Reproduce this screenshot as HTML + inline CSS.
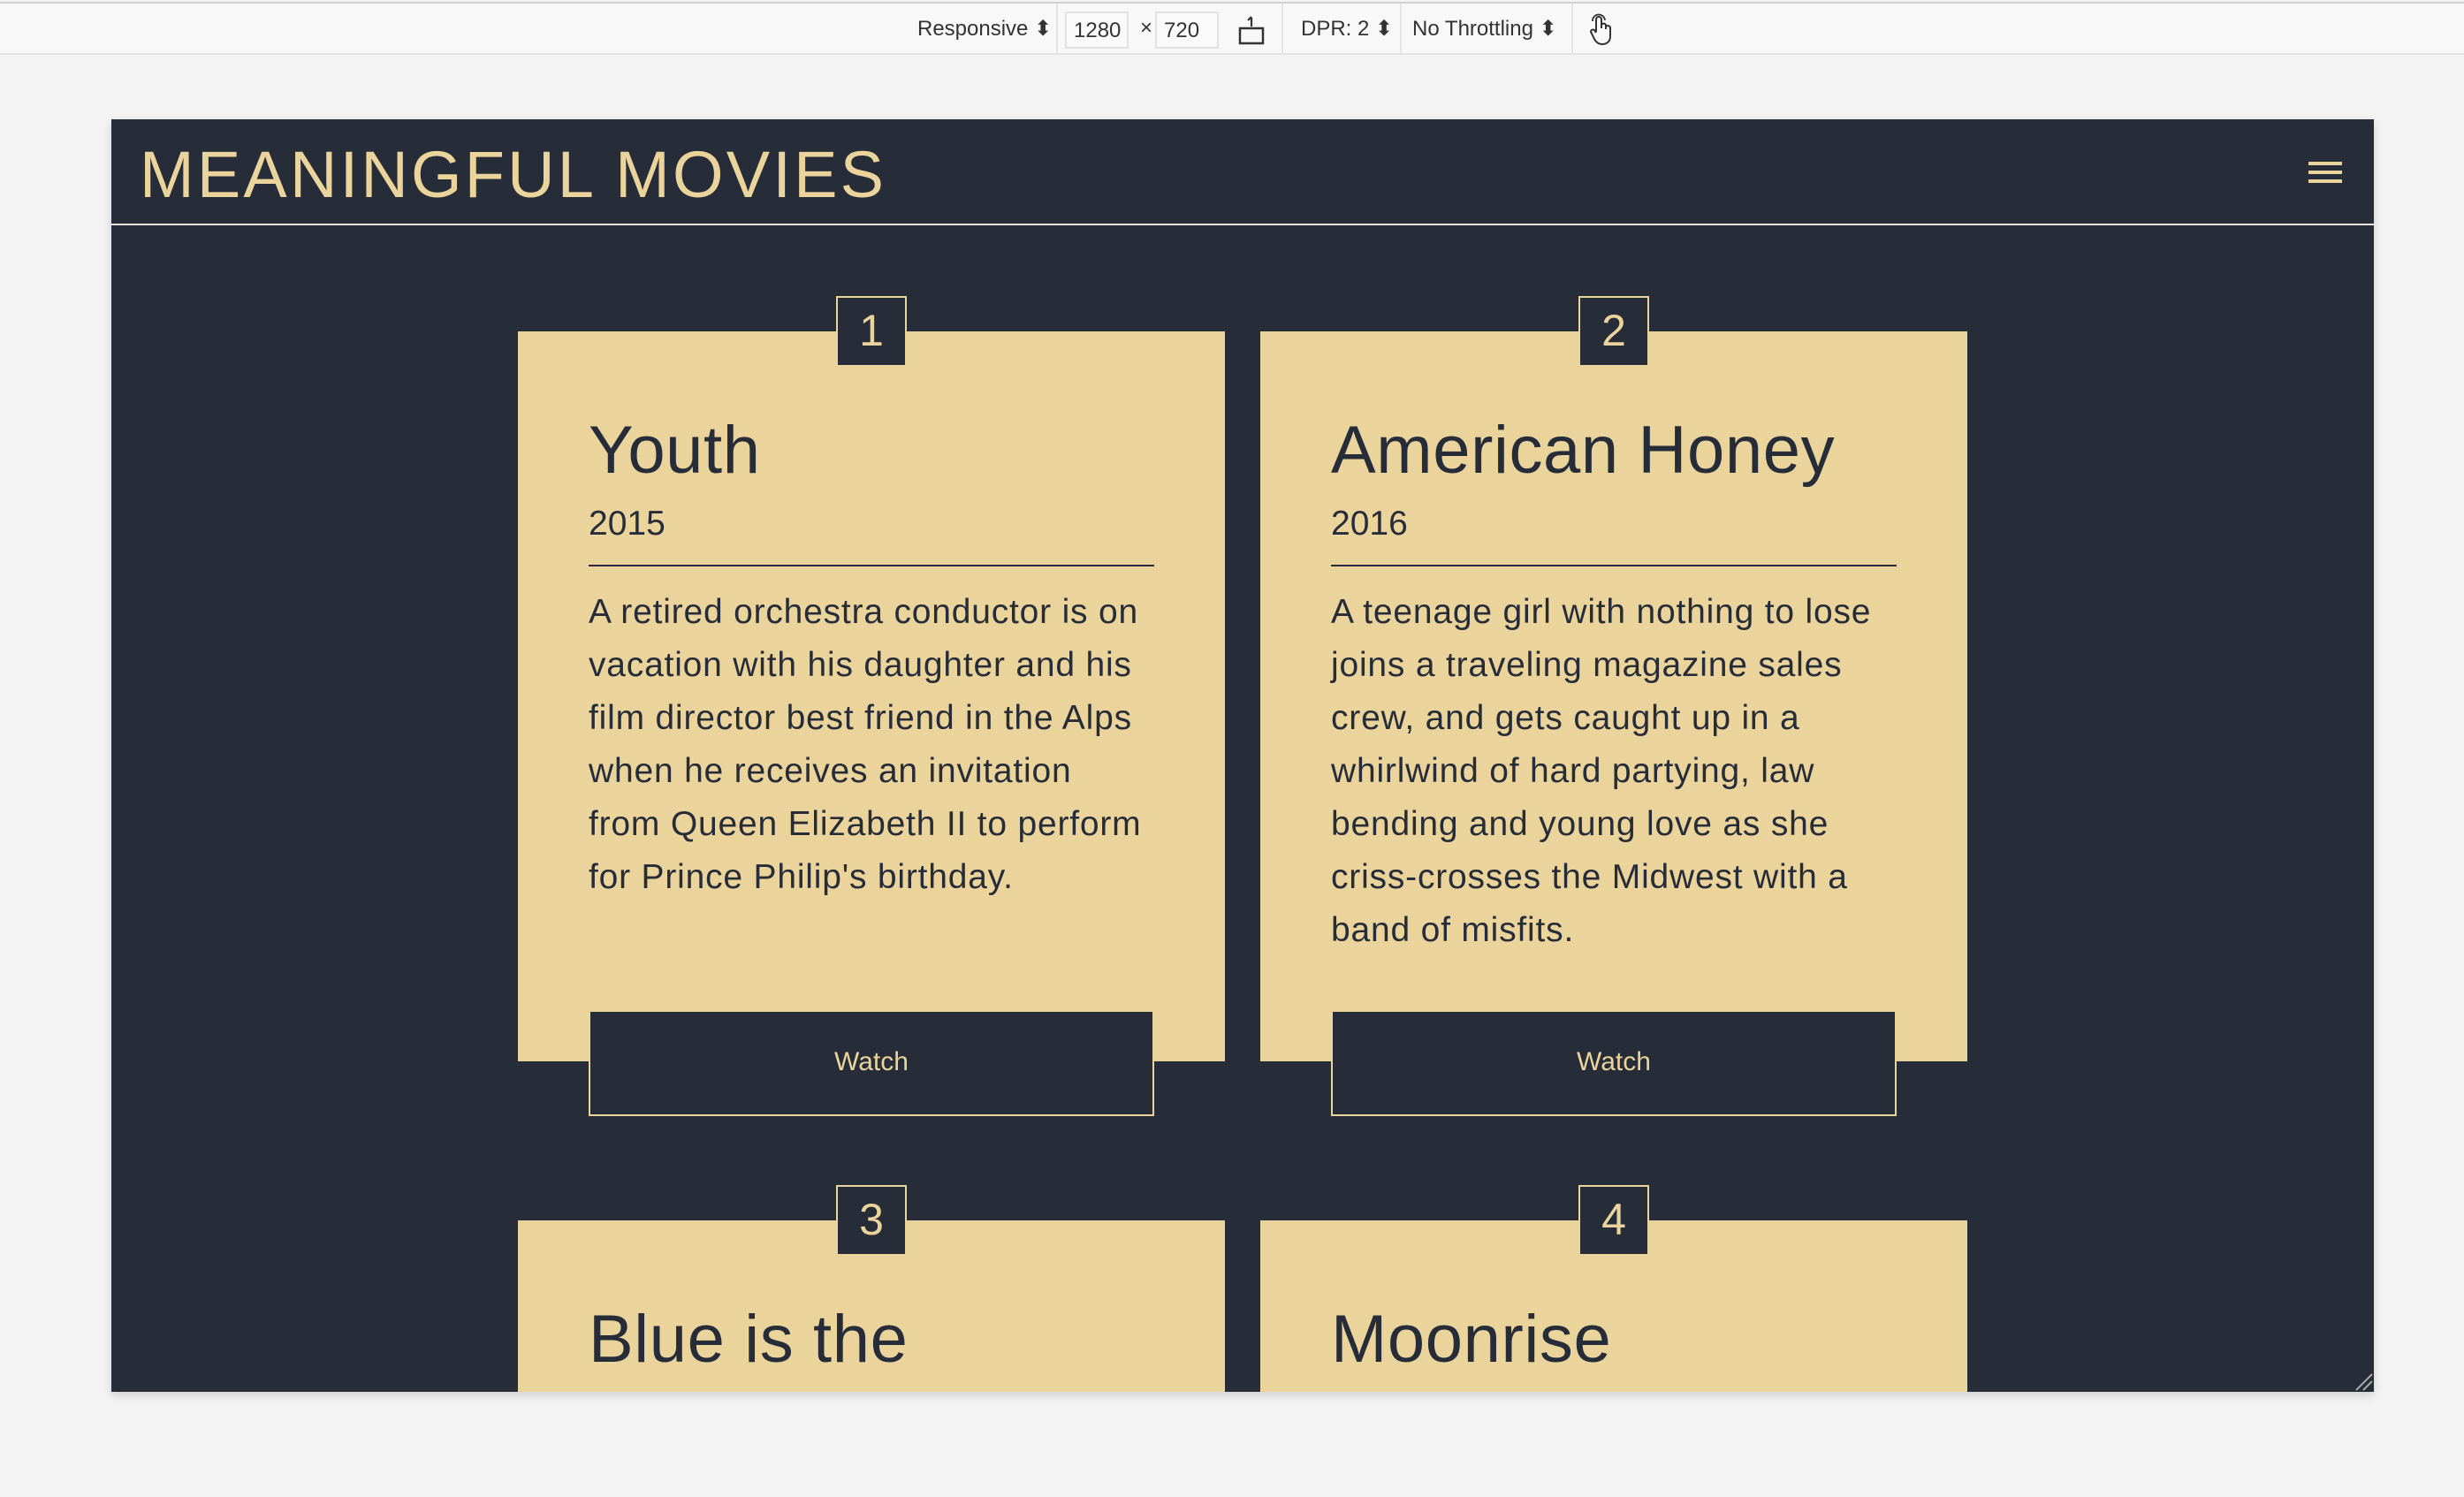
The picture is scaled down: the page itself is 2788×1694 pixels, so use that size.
<!DOCTYPE html>
<html><head><meta charset="utf-8"><style>
*{margin:0;padding:0;box-sizing:border-box}
html,body{width:2788px;height:1694px;overflow:hidden}
body{background:#f3f3f3;position:relative;font-family:"Liberation Sans",sans-serif}
.tb{position:absolute;left:0;top:2px;width:2788px;height:60px;background:#f8f8f8;border-top:2px solid #d0d0d0;border-bottom:2px solid #e2e2e2;font-size:24px;color:#333}
.tb span{position:absolute;top:14px}
.box{position:absolute;top:9px;height:42px;border:2px solid #e0e0e0;background:#fafafa;padding:6px 8px}
.div{position:absolute;top:0;width:2px;height:58px;background:#e4e4e4}
.vp{position:absolute;left:126px;top:135px;width:2560px;height:1440px;overflow:hidden;box-shadow:0 4px 10px rgba(0,0,0,.15)}
.in{width:1280px;height:720px;transform:scale(2);transform-origin:0 0;background:#262c38;position:relative;overflow:hidden;font-family:"Liberation Sans",sans-serif}
.hd{position:absolute;left:0;top:0;width:1280px;height:60px;border-bottom:1px solid #e8e3d6}
.hd h1{position:absolute;left:16px;top:12px;font-weight:400;font-size:37px;letter-spacing:1.6px;color:#ebd49b;line-height:40px}
.hb{position:absolute;left:1243px;width:19px;height:2px;background:#ebd49b}
.card{position:absolute;width:400px;background:#ebd49b;color:#262c38}
.num{position:absolute;width:40px;height:40px;background:#262c38;border:1px solid #ebd49b;color:#ebd49b;font-size:25px;text-align:center;line-height:38px}
.card h2{position:absolute;left:40px;font-weight:400;font-size:38px;line-height:40px;white-space:nowrap;letter-spacing:0.3px}
.yr{position:absolute;left:40px;top:98px;font-size:19.5px}
.ln{position:absolute;left:40px;top:132px;width:320px;height:1px;background:#262c38}
.p{position:absolute;left:40px;top:144px;width:315px;font-size:19.5px;line-height:30px;letter-spacing:0.4px}
.btn{position:absolute;width:320px;height:60px;background:#262c38;border:1px solid #ebd49b;color:#ebd49b;font-size:15px;text-align:center;line-height:58px}
</style></head><body>
<div class="tb">
<span style="left:1038px">Responsive ⬍</span>
<div class="div" style="left:1195px"></div>
<div class="box" style="left:1205px;width:72px">1280</div>
<span style="left:1290px">×</span>
<div class="box" style="left:1307px;width:72px">720</div>
<svg style="position:absolute;left:1400px;top:12px" width="32" height="36" viewBox="0 0 32 36"><rect x="3" y="16" width="26" height="17" fill="none" stroke="#333" stroke-width="2.5"/><path d="M16 14V4M12 7l4-4" fill="none" stroke="#333" stroke-width="2.2"/></svg>
<div class="div" style="left:1450px"></div>
<span style="left:1472px">DPR: 2 ⬍</span>
<div class="div" style="left:1584px"></div>
<span style="left:1598px">No Throttling ⬍</span>
<div class="div" style="left:1778px"></div>
<svg style="position:absolute;left:1796px;top:10px" width="30" height="40" viewBox="0 0 30 40"><path d="M10 22V8a3 3 0 016 0v10m0-4a3 3 0 015 0v5m0-3a3 3 0 015 1v10c0 6-4 9-9 9s-8-3-10-8l-3-6a2.5 2.5 0 014-2l2 3" fill="none" stroke="#333" stroke-width="2"/><path d="M6 10a7 7 0 0114-1" fill="none" stroke="#333" stroke-width="1.8"/></svg>
</div>
<div class="vp"><div class="in">
<div class="hd"><h1>MEANINGFUL MOVIES</h1>
<div class="hb" style="top:24px"></div><div class="hb" style="top:29px"></div><div class="hb" style="top:34px"></div></div>

<div class="card" style="left:230px;top:120px;height:413px">
<h2 style="top:48px">Youth</h2><div class="yr">2015</div><div class="ln"></div>
<div class="p">A retired orchestra conductor is on vacation with his daughter and his film director best friend in the Alps when he receives an invitation from Queen Elizabeth II to perform for Prince Philip's birthday.</div></div>
<div class="num" style="left:410px;top:100px">1</div>
<div class="btn" style="left:270px;top:504px">Watch</div>

<div class="card" style="left:650px;top:120px;height:413px">
<h2 style="top:48px">American Honey</h2><div class="yr">2016</div><div class="ln"></div>
<div class="p">A teenage girl with nothing to lose joins a traveling magazine sales crew, and gets caught up in a whirlwind of hard partying, law bending and young love as she criss-crosses the Midwest with a band of misfits.</div></div>
<div class="num" style="left:830px;top:100px">2</div>
<div class="btn" style="left:690px;top:504px">Watch</div>

<div class="card" style="left:230px;top:623px;height:97px"><h2 style="top:48px">Blue is the</h2></div>
<div class="num" style="left:410px;top:603px">3</div>
<div class="card" style="left:650px;top:623px;height:97px"><h2 style="top:48px">Moonrise</h2></div>
<div class="num" style="left:830px;top:603px">4</div>
<svg style="position:absolute;left:1268px;top:708px" width="12" height="12"><path d="M2 11L11 2M6 11L11 6" stroke="#aaa" stroke-width="1"/></svg>
</div></div>
</body></html>
